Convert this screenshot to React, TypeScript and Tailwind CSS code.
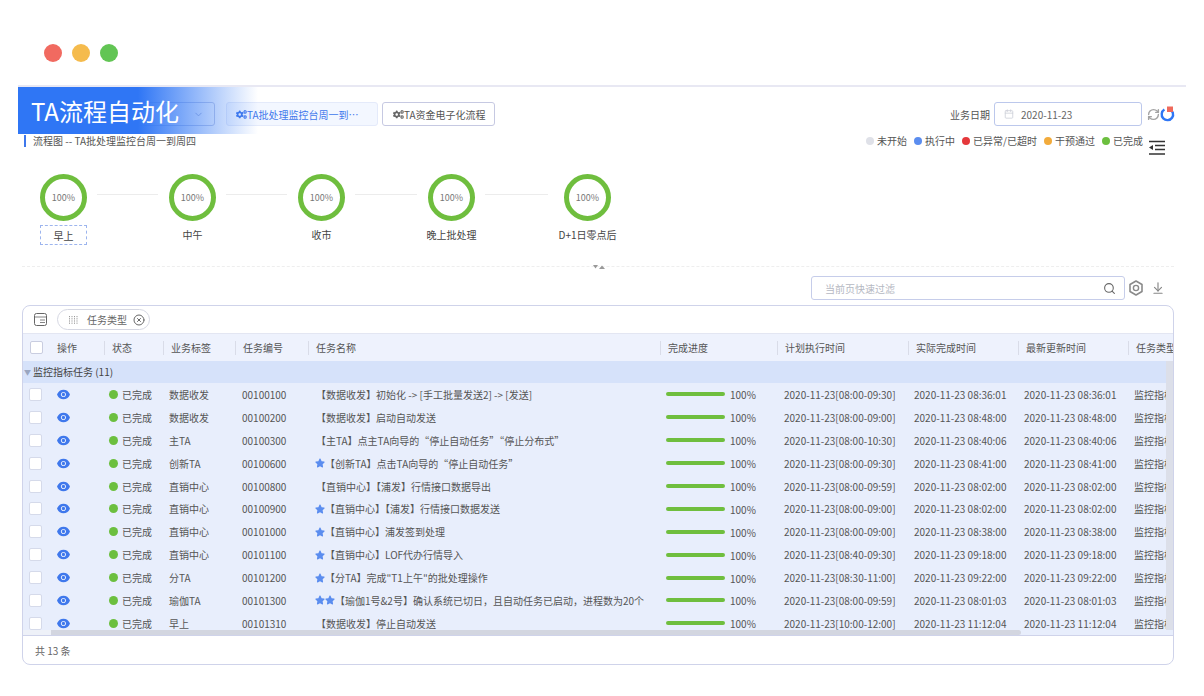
import { ArrowDownToLine, Calendar, ChevronDown, CircleX, RefreshCw, Search } from "lucide-react";
import { AiFillEye } from "react-icons/ai";
import { FaCogs, FaStar } from "react-icons/fa";

const font = { fontFamily: '"Noto Sans CJK SC", "Noto Sans", sans-serif' };

const rows = [
  { tag: "数据收发", no: "00100100", stars: 0, name: "【数据收发】初始化 -> [手工批量发送2] -> [发送]", plan: "08:00-09:30", done: "08:36:01" },
  { tag: "数据收发", no: "00100200", stars: 0, name: "【数据收发】启动自动发送", plan: "08:00-09:00", done: "08:48:00" },
  { tag: "主TA", no: "00100300", stars: 0, name: "【主TA】点主TA向导的“停止自动任务”“停止分布式”", plan: "08:00-10:30", done: "08:40:06" },
  { tag: "创新TA", no: "00100600", stars: 1, name: "【创新TA】点击TA向导的“停止自动任务”", plan: "08:00-09:30", done: "08:41:00" },
  { tag: "直销中心", no: "00100800", stars: 0, name: "【直销中心】【浦发】行情接口数据导出", plan: "08:00-09:59", done: "08:02:00" },
  { tag: "直销中心", no: "00100900", stars: 1, name: "【直销中心】【浦发】行情接口数据发送", plan: "08:00-09:00", done: "08:02:00" },
  { tag: "直销中心", no: "00101000", stars: 1, name: "【直销中心】浦发签到处理", plan: "08:00-09:00", done: "08:38:00" },
  { tag: "直销中心", no: "00101100", stars: 1, name: "【直销中心】LOF代办行情导入", plan: "08:40-09:30", done: "09:18:00" },
  { tag: "分TA", no: "00101200", stars: 1, name: "【分TA】完成\"T1上午\"的批处理操作", plan: "08:30-11:00", done: "09:22:00" },
  { tag: "瑜伽TA", no: "00101300", stars: 2, name: "【瑜伽1号&2号】确认系统已切日，且自动任务已启动，进程数为20个", plan: "08:00-09:59", done: "08:01:03" },
  { tag: "早上", no: "00101310", stars: 0, name: "【数据收发】停止自动发送", plan: "10:00-12:00", done: "11:12:04" },
];

const legend = [
  { label: "未开始", dot: "bg-[#dfe1e8]" },
  { label: "执行中", dot: "bg-[#5b8def]" },
  { label: "已异常/已超时", dot: "bg-[#e5383b]" },
  { label: "干预通过", dot: "bg-[#f2ab3c]" },
  { label: "已完成", dot: "bg-[#6cbf3f]" },
];

function FlowNode({ label, active }: { label: string; active?: boolean }) {
  return (
    <div className="flex w-[47px] shrink-0 flex-col items-center">
      <div className="flex h-[47px] w-[47px] items-center justify-center rounded-full border-[5px] border-[#6fbe3e] text-[9px] text-[#777]">
        100%
      </div>
      {active ? (
        <div className="mt-[4px] flex h-[20px] w-[47px] items-center justify-center border border-dashed border-[#9db5ee] text-[10px] text-[#444]">
          {label}
        </div>
      ) : (
        <div className="mt-[3px] flex h-[20px] items-center whitespace-nowrap text-[10px] text-[#444]">{label}</div>
      )}
    </div>
  );
}

function Connector({ className }: { className: string }) {
  return <div className={`mt-[20px] h-[1px] shrink-0 bg-[#ececec] ${className}`} />;
}

function HeadCell({ label, className }: { label: string; className: string }) {
  return (
    <div className={`flex h-full shrink-0 items-center ${className}`}>
      <div className="h-[14px] w-[1px] bg-[#d9dce8]" />
      <span className="ml-[7px] whitespace-nowrap">{label}</span>
    </div>
  );
}

export default function App() {
  return (
    <div className="flex h-[696px] w-[1204px] flex-col overflow-hidden bg-white" style={font}>
      {/* window dots */}
      <div className="flex h-[85px] shrink-0 gap-[10px] pl-[44px] pt-[44px]">
        <div className="h-[18px] w-[18px] rounded-full bg-[#f16a60]" />
        <div className="h-[18px] w-[18px] rounded-full bg-[#f5bb4d]" />
        <div className="h-[18px] w-[18px] rounded-full bg-[#62c554]" />
      </div>

      <div className="relative ml-[18px] w-[1168px] border-t-2 border-[#e8e8f3]">
        {/* title banner, lies over the dropdown */}
        <div className="absolute left-0 top-0 z-10 flex h-[47px] w-[240px] items-center bg-gradient-to-r from-[#2f76f5] from-[50%] to-transparent pl-[13px] text-[24px] leading-none text-white">
          TA流程自动化
        </div>

        {/* header row */}
        <div className="mt-[15px] flex h-[24px] items-center pl-[77px] pr-[11px]">
          <div className="flex h-[24px] w-[120px] items-center justify-end rounded-[3px] border border-[#c6cee8] pr-[10px]">
            <ChevronDown size={11} className="text-[#aab4d4]" />
          </div>
          <div className="ml-[11px] flex h-[24px] w-[152px] items-center rounded-[3px] border border-[#e4eafa] bg-[#f3f7ff] pl-[9px] text-[10px] text-[#3f78ec]">
            <FaCogs size={11} className="shrink-0" />
            <span className="whitespace-nowrap">TA批处理监控台周一到⋯</span>
          </div>
          <div className="ml-[4px] flex h-[24px] w-[113px] items-center rounded-[3px] border border-[#c6c9e2] pl-[10px] text-[10px] text-[#555]">
            <FaCogs size={11} className="shrink-0 text-[#666]" />
            <span className="whitespace-nowrap">TA资金电子化流程</span>
          </div>
          <div className="ml-auto whitespace-nowrap text-[10px] text-[#555]">业务日期</div>
          <div className="ml-[4px] flex h-[24px] w-[148px] items-center rounded-[3px] border border-[#bcc8ec] pl-[9px] text-[10px] text-[#666]">
            <Calendar size={10} className="text-[#ccd0d8]" />
            <span className="ml-[7px]">2020-11-23</span>
          </div>
          <RefreshCw size={13} strokeWidth={2.6} className="ml-[5px] text-[#a3a3a3]" />
          <svg width="15" height="16" viewBox="0 0 15 16">
            <path d="M4.4 3.6 A5.7 5.7 0 1 0 9.6 3.2" fill="none" stroke="#2f76f5" strokeWidth="2.4" />
            <path d="M7 0.5 L13 0.5 L13 6 L7 6 Z" fill="#ef6a5c" />
          </svg>
        </div>

        {/* breadcrumb and legend */}
        <div className="mt-[8px] flex h-[16px] items-start pl-[6px] pr-[20px]">
          <div className="mt-[1px] h-[12px] w-[2px] bg-[#3f78ec]" />
          <span className="ml-[7px] whitespace-nowrap text-[10px] leading-[14px] text-[#555]">流程图 -- TA批处理监控台周一到周四</span>
          <div className="ml-auto flex gap-[7px] pr-[25px]">
            {legend.map((item) => (
              <div key={item.label} className="flex items-center gap-[3px] whitespace-nowrap text-[10px] leading-[14px] text-[#555]">
                <span className={`h-[8px] w-[8px] rounded-full ${item.dot}`} />
                {item.label}
              </div>
            ))}
          </div>
          <svg width="18" height="16" viewBox="0 0 18 16" className="-ml-[20px] mt-[6px] shrink-0 text-[#333]">
            <path d="M1 1.5h16M7 5.5h10M7 9.5h10M1 14h16" stroke="currentColor" strokeWidth="1.4" fill="none" />
            <path d="M1 7.5 L5 5 V10 Z" fill="currentColor" />
          </svg>
        </div>

        {/* flow */}
        <div className="mt-[24px] flex h-[76px] items-start pl-[22px]">
          <FlowNode label="早上" active />
          <Connector className="ml-[10px] mr-[11px] w-[61px]" />
          <FlowNode label="中午" />
          <Connector className="ml-[10px] mr-[11px] w-[61px]" />
          <FlowNode label="收市" />
          <Connector className="ml-[10px] mr-[11px] w-[62px]" />
          <FlowNode label="晚上批处理" />
          <Connector className="ml-[10px] mr-[16px] w-[63px]" />
          <FlowNode label="D+1日零点后" />
        </div>

        {/* collapse divider */}
        <div className="relative ml-[4px] mt-[16px] h-[1px] w-[1152px] border-t border-dashed border-[#eeeeee]">
          <svg width="12" height="4" viewBox="0 0 12 4" className="absolute left-[571px] -top-[2px] text-[#999]">
            <path d="M0 0h5L2.5 3.5ZM6 4h6L9 0.5Z" fill="currentColor" />
          </svg>
        </div>

        {/* filter */}
        <div className="mt-[9px] flex h-[24px] items-center pl-[793px]">
          <div className="flex h-[24px] w-[314px] items-center justify-between rounded-[3px] border border-[#c6cdea] pl-[13px] pr-[8px] text-[10px] text-[#b5b8c2]">
            当前页快速过滤
            <Search size={13} className="text-[#666]" />
          </div>
          <svg width="16" height="16" viewBox="0 0 16 16" className="ml-[3px] text-[#8a8a8a]">
            <path d="M8 1 L14 4.5 V11.5 L8 15 L2 11.5 V4.5 Z" fill="none" stroke="currentColor" strokeWidth="1.6" strokeLinejoin="round" />
            <circle cx="8" cy="8" r="2.6" fill="none" stroke="currentColor" strokeWidth="1.4" />
          </svg>
          <ArrowDownToLine size={14} className="ml-[7px] text-[#888]" />
        </div>

        {/* table */}
        <div className="ml-[4px] mt-[5px] flex h-[360px] w-[1152px] flex-col overflow-hidden rounded-lg border border-[#cfd3ea] text-[10px] text-[#555]">
          <div className="flex h-[27px] shrink-0 items-center pl-[11px]">
            <svg width="13" height="13" viewBox="0 0 13 13" className="text-[#666]">
              <rect x="0.5" y="0.5" width="12" height="12" rx="2" fill="none" stroke="currentColor" />
              <path d="M1 4h11M6 7h5M6 9.5h5" stroke="currentColor" strokeWidth="0.8" />
            </svg>
            <div className="ml-[10px] flex h-[21px] w-[93px] items-center rounded-full border border-[#d5d7e2] pl-[11px] text-[#666]">
              <svg width="9" height="8" viewBox="0 0 9 8" className="text-[#999]">
                <path d="M0.5 0v8M3 0v8M5.5 0v8M8 0v8" stroke="currentColor" strokeWidth="1" strokeDasharray="1.2 1" />
              </svg>
              <span className="ml-[9px] whitespace-nowrap">任务类型</span>
              <CircleX size={12} className="ml-[6px] text-[#666]" />
            </div>
          </div>

          <div className="flex h-[28px] shrink-0 items-center border-t border-[#e3e6f2] bg-[#eef2fd] text-[#555]">
            <div className="w-[27px] shrink-0 pl-[7px]">
              <div className="h-[13px] w-[13px] rounded-[2px] border border-[#c9cde0] bg-white" />
            </div>
            <div className="w-[54px] shrink-0 whitespace-nowrap pl-[7px]">操作</div>
            <HeadCell label="状态" className="w-[59px]" />
            <HeadCell label="业务标签" className="w-[72px]" />
            <HeadCell label="任务编号" className="w-[73px]" />
            <HeadCell label="任务名称" className="w-[352px]" />
            <HeadCell label="完成进度" className="w-[117px]" />
            <HeadCell label="计划执行时间" className="w-[131px]" />
            <HeadCell label="实际完成时间" className="w-[110px]" />
            <HeadCell label="最新更新时间" className="w-[110px]" />
            <HeadCell label="任务类型" className="w-[60px]" />
          </div>

          <div className="flex h-[269px] shrink-0">
            <div className="min-w-0 flex-1 overflow-hidden bg-[#e8eefc]">
              <div className="flex h-[22px] items-center bg-[#d6e2fa] text-[#444]">
                <span className="ml-[1px] text-[7px] text-[#9aa6c0]">▼</span>
                <span className="ml-[2px] -mt-[1px]">监控指标任务 (11)</span>
              </div>
              {rows.map((row) => (
                <div key={row.no} className="flex h-[22.9px] items-center">
                  <div className="w-[27px] shrink-0 pl-[6px]">
                    <div className="h-[13px] w-[13px] rounded-[2px] border-[1.5px] border-[#d5daea] bg-white" />
                  </div>
                  <div className="w-[54px] shrink-0 pl-[6px]">
                    <AiFillEye size={15} className="text-[#3f78ec]" />
                  </div>
                  <div className="flex w-[59px] shrink-0 items-center gap-[4px] whitespace-nowrap pl-[5px]">
                    <span className="h-[9px] w-[9px] rounded-full bg-[#6cbf3f]" />
                    已完成
                  </div>
                  <div className="w-[72px] shrink-0 whitespace-nowrap pl-[6px]">{row.tag}</div>
                  <div className="w-[73px] shrink-0 pl-[7px]">{row.no}</div>
                  <div className="flex w-[352px] shrink-0 items-center whitespace-nowrap pl-[8px]">
                    {row.stars > 0 && (
                      <span className="-ml-[1px] flex">
                        {Array.from({ length: row.stars }).map((_, i) => (
                          <FaStar key={i} size={10} className="text-[#5b8def]" />
                        ))}
                      </span>
                    )}
                    {row.name}
                  </div>
                  <div className="flex w-[117px] shrink-0 items-center pl-[6px]">
                    <div className="h-[4px] w-[59px] rounded-full bg-[#6fbe3e]" />
                    <span className="ml-[5px] mt-[1px]">100%</span>
                  </div>
                  <div className="w-[131px] shrink-0 whitespace-nowrap pl-[7px]">2020-11-23[{row.plan}]</div>
                  <div className="w-[110px] shrink-0 whitespace-nowrap pl-[6px]">2020-11-23 {row.done}</div>
                  <div className="w-[110px] shrink-0 whitespace-nowrap pl-[6px]">2020-11-23 {row.done}</div>
                  <div className="shrink-0 whitespace-nowrap pl-[6px]">监控指标</div>
                </div>
              ))}
            </div>
            <div className="w-[7px] shrink-0 bg-[#dcdfe9]" />
          </div>

          <div className="flex h-[6px] shrink-0 border-b border-[#cfd3ea] bg-[#e8eefc]">
            <div className="h-full w-[28px] bg-[#eef1f8]" />
            <div className="h-full w-[970px] rounded-r-full bg-[#d3d6e0]" />
          </div>

          <div className="flex flex-1 items-center pl-[12px] text-[#666]">共 13 条</div>
        </div>
      </div>
    </div>
  );
}
